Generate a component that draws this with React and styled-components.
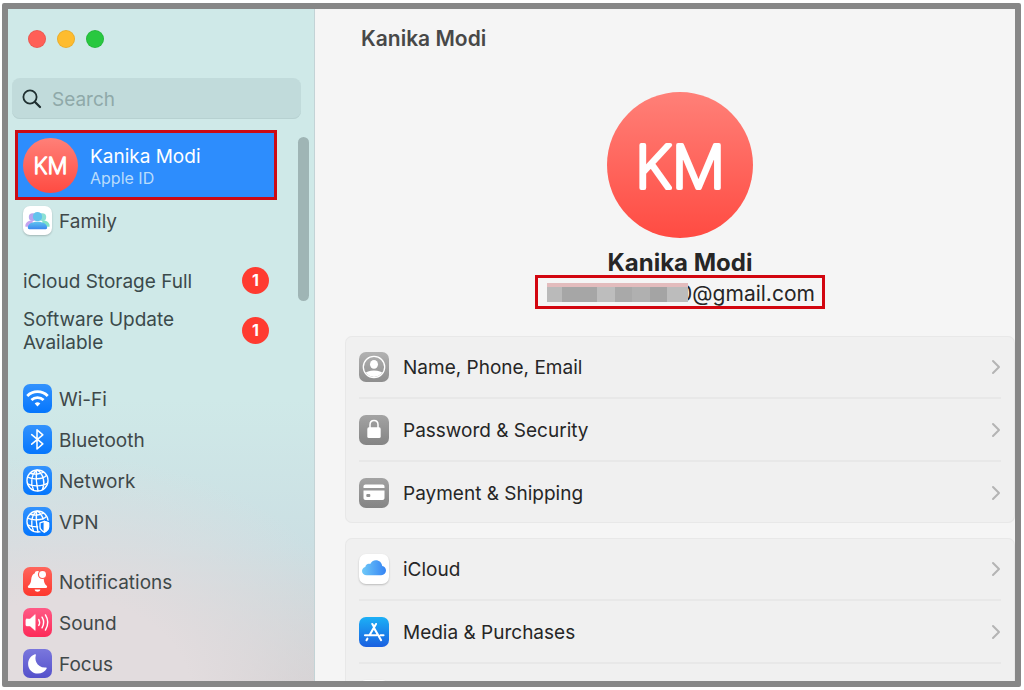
import React, { useState } from 'react';
import styled, { createGlobalStyle } from 'styled-components';

const GlobalStyle = createGlobalStyle`
  *, *::before, *::after {
    box-sizing: border-box;
  }

  body {
    margin: 0;
    background: #fff;
    font-family: Inter, "Liberation Sans", sans-serif;
    -webkit-font-smoothing: antialiased;
  }

  ul {
    list-style: none;
    margin: 0;
    padding: 0;
  }
`;

const Page = styled.div`
  height: 100vh;
  padding: 3px 3px 3px 2px;
`;

const Window = styled.div`
  display: flex;
  height: 100%;
  border: 6px solid #878787;
  border-radius: 2px;
  overflow: hidden;
  background: #f5f5f5;
`;

const Sidebar = styled.aside`
  flex: 0 0 307px;
  display: flex;
  flex-direction: column;
  overflow: hidden;
  border-right: 1px solid #c3d3d6;
  background:
    radial-gradient(ellipse 320px 240px at 18% 102%, #e2dcde 40%, rgba(226, 220, 222, 0) 100%),
    linear-gradient(180deg, #cfe9e8 0%, #cfe9e8 58%, #cbdfe3 80%, #d1cfd1 100%);
`;

const TrafficLights = styled.div`
  display: flex;
  gap: 11px;
  padding: 21px 20px 0;
`;

const Light = styled.button`
  width: 18px;
  height: 18px;
  padding: 0;
  border: 1px solid rgba(0, 0, 0, 0.08);
  border-radius: 50%;
  background: ${(props) => props.$color};
`;

const SearchBox = styled.label`
  display: flex;
  align-items: center;
  gap: 10px;
  height: 41px;
  margin: 30px 13px 11px 4px;
  padding: 1px 10px 0;
  border-radius: 8px;
  background: #c1dbdb;
  box-shadow: inset 0 -1px 0 #b7d1d1;
  color: #1f2f30;

  svg {
    flex: none;
  }
`;

const SearchInput = styled.input`
  flex: 1;
  min-width: 0;
  padding: 0;
  border: none;
  outline: none;
  background: transparent;
  color: #2f3d3e;
  font: inherit;
  font-size: 19px;

  &::placeholder {
    color: #8fa9a9;
    opacity: 1;
  }
`;

const ScrollArea = styled.div`
  flex: 1;
  display: flex;
  gap: 21px;
  min-height: 0;
  padding: 0 5px 0 7px;
  overflow: hidden;
`;

const ScrollThumb = styled.div`
  width: 11px;
  height: 164px;
  margin-top: 7px;
  border-radius: 6px;
  background: #9fb5b5;
`;

const Nav = styled.nav`
  flex: 1;
  display: flex;
  flex-direction: column;
  gap: 19px;
`;

const AccountLink = styled.a`
  display: flex;
  align-items: center;
  gap: 12px;
  height: 70px;
  padding: 1px 5px 0;
  border: 3px solid #cc0a14;
  background: #2d8dfd;
  color: #fff;
  text-decoration: none;
`;

const AccountText = styled.span`
  display: flex;
  flex-direction: column;
  padding-top: 2px;
  font-size: 19px;
  line-height: 23px;

  small {
    font-size: 16px;
    line-height: 20px;
    color: #b9dcfb;
  }
`;

const Avatar = styled.div`
  flex: none;
  width: ${(props) => props.$size}px;
  height: ${(props) => props.$size}px;
  border-radius: 50%;
  background: linear-gradient(180deg, #ff8078 0%, #ff4b42 100%);

  svg {
    display: block;
    width: 100%;
    height: 100%;
  }

  text {
    fill: #fff;
    stroke: #fff;
    stroke-linejoin: round;
    text-anchor: middle;
    font-weight: 200;
  }
`;

const NavLink = styled.a`
  display: flex;
  align-items: center;
  gap: 7px;
  height: 41px;
  padding-left: 8px;
  color: #3f4849;
  font-size: 19px;
  text-decoration: none;
`;

const Label = styled.span`
  padding-top: 2px;
`;

const AlertLink = styled.a`
  display: flex;
  align-items: center;
  justify-content: space-between;
  min-height: 40px;
  padding: 6px 8px 5px;
  color: #3b4a4b;
  font-size: 19px;
  line-height: 23px;
  text-decoration: none;

  ${Label} {
    max-width: 180px;
  }
`;

const Badge = styled.b`
  flex: none;
  width: 27px;
  height: 27px;
  border-radius: 50%;
  background: #ff3b30;
  color: #fff;
  font-size: 16px;
  line-height: 27px;
  text-align: center;
`;

const Tile = styled.span`
  flex: none;
  display: flex;
  width: ${(props) => props.$size}px;
  height: ${(props) => props.$size}px;
  border-radius: 7px;
  background: ${(props) => props.$fill};
  box-shadow: ${(props) => (props.$raised ? '0 1px 2px rgba(0, 0, 0, 0.22)' : 'none')};

  svg {
    width: 100%;
    height: 100%;
  }
`;

const Main = styled.main`
  flex: 1;
  min-width: 0;
  padding: 0 0 0 30px;
  overflow: hidden;
  color: #262626;
`;

const Title = styled.h1`
  margin: 0;
  padding: 17px 16px 0;
  font-size: 21px;
  font-weight: 600;
  line-height: 25px;
  color: #484848;
`;

const Profile = styled.section`
  display: flex;
  flex-direction: column;
  align-items: center;
  padding: 41px 0 27px;
`;

const ProfileName = styled.h2`
  margin: 13px 0 0;
  font-size: 24px;
  font-weight: 700;
  line-height: 24px;
`;

const EmailBox = styled.div`
  display: flex;
  align-items: center;
  height: 34px;
  padding: 1px 7px 0 9px;
  border: 3px solid #d2060f;
  font-size: 21px;
  line-height: 26px;
`;

const Mosaic = styled.span`
  display: flex;
  height: 19px;
  margin-right: -9px;
  border-top: 4px solid #e3bcbd;
  z-index: 1;
`;

const MosaicBlock = styled.i`
  width: ${(props) => props.$width}px;
  background: ${(props) => props.$shade};
`;

const Card = styled.ul`
  & + & {
    margin-top: 15px;
  }

  border-radius: 7px;
  background: #f0f0f0;
  box-shadow: inset 0 0 0 1px #e8e8e8;
  padding: 0 14px;
`;

const Row = styled.li`
  &:not(:last-child) {
    border-bottom: 2px solid #e8e8e8;
  }
`;

const RowLink = styled.a`
  display: flex;
  align-items: center;
  gap: 14px;
  height: 61px;
  color: #262626;
  font-size: 19px;
  text-decoration: none;

  & > svg {
    margin-left: auto;
  }
`;

const white = { stroke: '#fff', fill: 'none', strokeLinecap: 'round', strokeLinejoin: 'round' };

const SearchIcon = () => (
  <svg width="20" height="20" viewBox="0 0 20 20" fill="none" stroke="currentColor" strokeLinecap="round">
    <circle cx="8" cy="8" r="6.6" strokeWidth="1.8" />
    <path d="M13 13l5 5" strokeWidth="2.3" />
  </svg>
);

const Chevron = () => (
  <svg width="10" height="16" viewBox="0 0 10 16" fill="none" stroke="#b4b4b4" strokeWidth="2" strokeLinecap="round" strokeLinejoin="round">
    <path d="M2 2l6 6-6 6" />
  </svg>
);

const FamilyIcon = () => (
  <svg viewBox="0 0 30 30">
    <defs>
      <linearGradient id="family-front" x1="0" y1="0" x2="0" y2="1">
        <stop offset="0" stopColor="#61c5ef" />
        <stop offset="1" stopColor="#3b87ee" />
      </linearGradient>
    </defs>
    <circle cx="10" cy="11.500" r="4" fill="#b8a4ee" />
    <circle cx="20" cy="11.500" r="4" fill="#8ce0d4" />
    <path d="M2.500 21.500c-.6-4.500 3-6.500 7.500-6.500v6.500z" fill="#c5a3ef" />
    <path d="M27.500 21.500c.6-4.500-3-6.500-7.500-6.500v6.500z" fill="#7fe2c6" />
    <circle cx="15" cy="11" r="4.800" fill="#62c3ec" />
    <path d="M5 22.600c0-4 4-6.300 10-6.300s10 2.300 10 6.300c0 1-.6 1.400-1.500 1.400h-17c-1 0-1.500-.4-1.500-1.400z" fill="url(#family-front)" />
  </svg>
);

const WifiIcon = () => (
  <svg viewBox="0 0 30 30" {...white} strokeWidth="2.900" strokeLinecap="butt">
    <path d="M4.400 12.300a15 15 0 0 1 21.200 0" />
    <path d="M8.700 16.600a9 9 0 0 1 12.600 0" />
    <path d="M15 23.200l-2.900-3a4.200 4.200 0 0 1 5.800 0z" fill="#fff" stroke="none" />
  </svg>
);

const BluetoothIcon = () => (
  <svg viewBox="0 0 30 30" {...white} strokeWidth="1.600">
    <path d="M9 10l11.500 9.600-6 5.200V5l6 5.200L9 19.800" />
  </svg>
);

const globeLines = (
  <>
    <circle cx="15" cy="15" r="10.900" />
    <path d="M5 11.500c5 2.800 15 2.300 19-1.500M4.800 18.500c4.500 2.800 15 3 20.300-.6M14 4.300c-.7 7-.3 14 1.500 21.300M13.500 4.500C8.600 9.500 7.600 18 10.800 24.600M15 4.300c6.200 4.200 8.200 13 5.200 20M7.500 7.500c4.500 1.500 10.500 1 13.500-1" />
  </>
);

const NetworkIcon = () => (
  <svg viewBox="0 0 30 30" {...white} strokeWidth="1.400">
    {globeLines}
  </svg>
);

const VpnIcon = () => (
  <svg viewBox="0 0 30 30" {...white} strokeWidth="1.400">
    {globeLines}
    <path d="M22 13.800l5.300 2v5.200c0 3-2.300 4.700-5.300 6-3-1.300-5.300-3-5.300-6v-5.200z" fill="#0a7bfd" stroke="#0a7bfd" strokeWidth="2" />
    <path d="M22 14.800l4.400 1.700v4.300c0 2.600-2 4-4.400 5.100-2.400-1.100-4.400-2.500-4.400-5.100v-4.300z" />
    <path d="M22 14.800l4.400 1.700v4.300c0 2.600-2 4-4.400 5.100z" fill="#fff" />
  </svg>
);

const BellIcon = () => (
  <svg viewBox="0 0 30 30" fill="#fff">
    <path d="M14.800 4.200c1.500 0 2.500.9 2.700 2.200 3 1.200 3.700 3.400 4 6.600.3 3 .8 4.600 3 6.500 1 1.100.4 2.300-.8 2.300H6.300c-1.300 0-1.800-1.200-.8-2.300 2.200-1.900 2.700-3.500 3-6.500.3-3.200 1.100-5.400 3.700-6.600.2-1.300 1.100-2.200 2.600-2.200z" />
    <circle cx="20.200" cy="7.700" r="4.200" stroke="#fe564c" strokeWidth="1.200" />
    <path d="M12 23.200h6c-.4 1.500-1.500 2.300-3 2.300s-2.600-.8-3-2.300z" />
  </svg>
);

const SoundIcon = () => (
  <svg viewBox="0 0 30 30" {...white} strokeWidth="1.500">
    <path d="M4 11.500h3.300l5.300-4.700v16.400l-5.300-4.700H4c-.7 0-1-.3-1-1v-5c0-.7.3-1 1-1z" fill="#fff" strokeWidth=".6" />
    <path d="M16.300 12c1.100 1.900 1.100 4.100 0 6M19.700 9.500c2.100 3.400 2.100 7.600 0 11M23.200 7.200c3 4.800 3 10.800 0 15.600" />
  </svg>
);

const MoonIcon = () => (
  <svg viewBox="0 0 30 30">
    <path d="M12.300 5.500c.8-.3 1.200.3 1 1-.7 2.200-.6 4.700.5 7.200 1.700 3.700 5.400 5.800 9.700 5.400.9-.1 1.300.6.9 1.300-1.800 3.100-5 5-8.900 5C9.600 25.400 5.300 21 5.300 15.400c0-4.400 2.700-8.300 7-9.900z" fill="#fff" />
  </svg>
);

const PersonIcon = () => (
  <svg viewBox="0 0 30 30">
    <defs>
      <clipPath id="person-clip">
        <circle cx="15" cy="15" r="10" />
      </clipPath>
    </defs>
    <circle cx="15" cy="15" r="10.700" fill="none" stroke="#fff" strokeWidth="1.300" />
    <g fill="#fff" clipPath="url(#person-clip)">
      <ellipse cx="15" cy="12.300" rx="4" ry="4.400" />
      <path d="M5 26v-3.500c2-3 5.500-4 10-4s8 1 10 4V26z" />
    </g>
  </svg>
);

const LockIcon = () => (
  <svg viewBox="0 0 30 30">
    <rect x="8.300" y="12.300" width="13.400" height="10.700" rx="1.600" fill="#fff" />
    <path d="M11 13V9.800c0-5.800 8-5.800 8 0V13" fill="none" stroke="#fff" strokeWidth="1.500" />
  </svg>
);

const CardIcon = () => (
  <svg viewBox="0 0 30 30">
    <path d="M6.500 6.500h17c1.200 0 2 .8 2 2V10h-21V8.500c0-1.200.8-2 2-2z" fill="#fff" />
    <path d="M4.500 12.500h21v7.500c0 1.200-.8 2-2 2h-17c-1.200 0-2-.8-2-2z" fill="#fff" />
    <rect x="7.300" y="16" width="4" height="3" rx="1" fill="#929292" />
  </svg>
);

const CloudIcon = () => (
  <svg viewBox="0 0 30 30">
    <defs>
      <linearGradient id="cloud-fill" x1="0" y1="0" x2="1" y2="0">
        <stop offset="0" stopColor="#6fc9f8" />
        <stop offset="1" stopColor="#3584f4" />
      </linearGradient>
    </defs>
    <path d="M7.800 21.200C5 21.200 3 19.400 3 17c0-2 1.400-3.600 3.300-4.100.2-2.400 2.700-3.900 4.900-2.900 1.200-2.500 3.100-3.800 5.600-3.800 3.500 0 6 2.400 6.400 5.800 2.300.4 3.800 2.200 3.800 4.500 0 2.700-2 4.700-4.800 4.700z" fill="url(#cloud-fill)" />
  </svg>
);

const AppStoreIcon = () => (
  <svg viewBox="0 0 30 30" {...white} strokeWidth="2.100">
    <path d="M13.300 7l1.500 2.600M17 7l-6.500 11.200M6 18.200h11.500M8.400 21.700l-.9 1.500M15.300 11.500l6.800 11.700M21.500 18.200H24.500" />
  </svg>
);

const blue = 'linear-gradient(180deg, #3292fd 0%, #0576fd 100%)';
const gray = 'linear-gradient(180deg, #a3a3a3 0%, #848484 100%)';

const alerts = ['iCloud Storage Full', 'Software Update Available'];

const navGroups = [
  [
    { label: 'Wi-Fi', icon: WifiIcon, fill: blue },
    { label: 'Bluetooth', icon: BluetoothIcon, fill: blue },
    { label: 'Network', icon: NetworkIcon, fill: blue },
    { label: 'VPN', icon: VpnIcon, fill: blue },
  ],
  [
    { label: 'Notifications', icon: BellIcon, fill: 'linear-gradient(180deg, #ff665c 0%, #fd382e 100%)' },
    { label: 'Sound', icon: SoundIcon, fill: 'linear-gradient(180deg, #ff5a86 0%, #fd2a58 100%)' },
    { label: 'Focus', icon: MoonIcon, fill: 'linear-gradient(180deg, #7a77dd 0%, #5551cb 100%)' },
  ],
];

const cards = [
  [
    { label: 'Name, Phone, Email', icon: PersonIcon, fill: 'linear-gradient(180deg, #b2b2b2 0%, #8e8e8e 100%)' },
    { label: 'Password & Security', icon: LockIcon, fill: gray },
    { label: 'Payment & Shipping', icon: CardIcon, fill: gray },
  ],
  [
    { label: 'iCloud', icon: CloudIcon, fill: '#fff', raised: true },
    { label: 'Media & Purchases', icon: AppStoreIcon, fill: 'linear-gradient(180deg, #1cb0f6 0%, #1a5fe0 100%)' },
    { label: '', icon: FamilyIcon, fill: '#fff', raised: true },
  ],
];

const mosaic = [
  [15, '#bababa'],
  [35, '#a6a6a6'],
  [18, '#bdbdbd'],
  [17, '#a9a9a9'],
  [18, '#b0b0b0'],
  [17, '#a4a4a4'],
  [21, '#bcbcbc'],
];

const Initials = ({ size }) => (
  <Avatar $size={size}>
    <svg viewBox="0 0 146 146">
      <text x="73" y="96" fontSize="59" strokeWidth="4">KM</text>
    </svg>
  </Avatar>
);

const NavItem = ({ item }) => (
  <li>
    <NavLink href="#">
      <Tile $size={29} $fill={item.fill} $raised={item.raised}>
        <item.icon />
      </Tile>
      <Label>{item.label}</Label>
    </NavLink>
  </li>
);

const App = () => {
  const [query, setQuery] = useState('');

  return (
    <>
      <GlobalStyle />
      <Page>
        <Window>
          <Sidebar>
            <TrafficLights>
              <Light $color="#ff5f57" aria-label="Close" />
              <Light $color="#febc2e" aria-label="Minimize" />
              <Light $color="#28c840" aria-label="Zoom" />
            </TrafficLights>
            <SearchBox>
              <SearchIcon />
              <SearchInput
                type="text"
                aria-label="Search"
                placeholder="Search"
                value={query}
                onChange={(e) => setQuery(e.target.value)}
              />
            </SearchBox>
            <ScrollArea>
              <Nav>
                <div>
                  <AccountLink href="#">
                    <Initials size={55} />
                    <AccountText>
                      Kanika Modi
                      <small>Apple ID</small>
                    </AccountText>
                  </AccountLink>
                  <ul>
                    <NavItem item={{ label: 'Family', icon: FamilyIcon, fill: '#fff', raised: true }} />
                  </ul>
                </div>
                <ul>
                  {alerts.map((label) => (
                    <li key={label}>
                      <AlertLink href="#">
                        <Label>{label}</Label>
                        <Badge>1</Badge>
                      </AlertLink>
                    </li>
                  ))}
                </ul>
                {navGroups.map((group, index) => (
                  <ul key={index}>
                    {group.map((item) => (
                      <NavItem key={item.label} item={item} />
                    ))}
                  </ul>
                ))}
              </Nav>
              <ScrollThumb />
            </ScrollArea>
          </Sidebar>
          <Main>
            <Title>Kanika Modi</Title>
            <Profile>
              <Initials size={146} />
              <ProfileName>Kanika Modi</ProfileName>
              <EmailBox>
                <Mosaic>
                  {mosaic.map(([width, shade], index) => (
                    <MosaicBlock key={index} $width={width} $shade={shade} />
                  ))}
                </Mosaic>
                <Label>0@gmail.com</Label>
              </EmailBox>
            </Profile>
            {cards.map((rows, index) => (
              <Card key={index}>
                {rows.map((row) => (
                  <Row key={row.label}>
                    <RowLink href="#">
                      <Tile $size={30} $fill={row.fill} $raised={row.raised}>
                        <row.icon />
                      </Tile>
                      <Label>{row.label}</Label>
                      <Chevron />
                    </RowLink>
                  </Row>
                ))}
              </Card>
            ))}
          </Main>
        </Window>
      </Page>
    </>
  );
};

export default App;
